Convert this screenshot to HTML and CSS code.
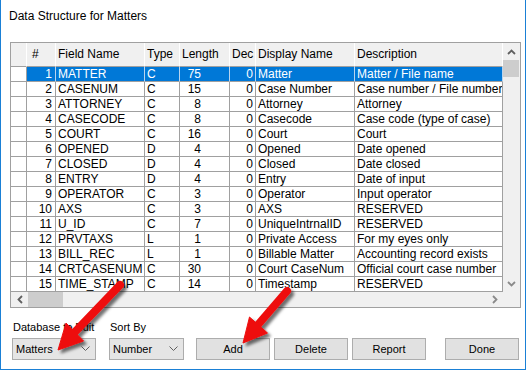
FILE: index.html
```html
<!DOCTYPE html>
<html>
<head>
<meta charset="utf-8">
<link rel="stylesheet" href="styles.css">
</head>
<body>
<div class="window">
  <div class="title">Data Structure for Matters</div>

  <div class="grid">
    <div class="grid-main">
      <div class="table">
        <div class="row head">
          <div class="c sl"></div><div class="c n">#</div><div class="c">Field Name</div><div class="c">Type</div><div class="c">Length</div><div class="c">Dec</div><div class="c">Display Name</div><div class="c">Description</div>
        </div>
        <div class="row sel">
          <div class="c sl"></div><div class="c n">1</div><div class="c">MATTER</div><div class="c">C</div><div class="c len">75</div><div class="c dec">0</div><div class="c">Matter</div><div class="c">Matter / File name</div>
        </div>
        <div class="row">
          <div class="c sl"></div><div class="c n">2</div><div class="c">CASENUM</div><div class="c">C</div><div class="c len">15</div><div class="c dec">0</div><div class="c">Case Number</div><div class="c">Case number / File number</div>
        </div>
        <div class="row">
          <div class="c sl"></div><div class="c n">3</div><div class="c">ATTORNEY</div><div class="c">C</div><div class="c len">8</div><div class="c dec">0</div><div class="c">Attorney</div><div class="c">Attorney</div>
        </div>
        <div class="row">
          <div class="c sl"></div><div class="c n">4</div><div class="c">CASECODE</div><div class="c">C</div><div class="c len">8</div><div class="c dec">0</div><div class="c">Casecode</div><div class="c">Case code (type of case)</div>
        </div>
        <div class="row">
          <div class="c sl"></div><div class="c n">5</div><div class="c">COURT</div><div class="c">C</div><div class="c len">16</div><div class="c dec">0</div><div class="c">Court</div><div class="c">Court</div>
        </div>
        <div class="row">
          <div class="c sl"></div><div class="c n">6</div><div class="c">OPENED</div><div class="c">D</div><div class="c len">4</div><div class="c dec">0</div><div class="c">Opened</div><div class="c">Date opened</div>
        </div>
        <div class="row">
          <div class="c sl"></div><div class="c n">7</div><div class="c">CLOSED</div><div class="c">D</div><div class="c len">4</div><div class="c dec">0</div><div class="c">Closed</div><div class="c">Date closed</div>
        </div>
        <div class="row">
          <div class="c sl"></div><div class="c n">8</div><div class="c">ENTRY</div><div class="c">D</div><div class="c len">4</div><div class="c dec">0</div><div class="c">Entry</div><div class="c">Date of input</div>
        </div>
        <div class="row">
          <div class="c sl"></div><div class="c n">9</div><div class="c">OPERATOR</div><div class="c">C</div><div class="c len">3</div><div class="c dec">0</div><div class="c">Operator</div><div class="c">Input operator</div>
        </div>
        <div class="row">
          <div class="c sl"></div><div class="c n">10</div><div class="c">AXS</div><div class="c">C</div><div class="c len">3</div><div class="c dec">0</div><div class="c">AXS</div><div class="c">RESERVED</div>
        </div>
        <div class="row">
          <div class="c sl"></div><div class="c n">11</div><div class="c">U_ID</div><div class="c">C</div><div class="c len">7</div><div class="c dec">0</div><div class="c">UniqueIntrnalID</div><div class="c">RESERVED</div>
        </div>
        <div class="row">
          <div class="c sl"></div><div class="c n">12</div><div class="c">PRVTAXS</div><div class="c">L</div><div class="c len">1</div><div class="c dec">0</div><div class="c">Private Access</div><div class="c">For my eyes only</div>
        </div>
        <div class="row">
          <div class="c sl"></div><div class="c n">13</div><div class="c">BILL_REC</div><div class="c">L</div><div class="c len">1</div><div class="c dec">0</div><div class="c">Billable Matter</div><div class="c">Accounting record exists</div>
        </div>
        <div class="row">
          <div class="c sl"></div><div class="c n">14</div><div class="c">CRTCASENUM</div><div class="c">C</div><div class="c len">30</div><div class="c dec">0</div><div class="c">Court CaseNum</div><div class="c">Official court case number</div>
        </div>
        <div class="row">
          <div class="c sl"></div><div class="c n">15</div><div class="c">TIME_STAMP</div><div class="c">C</div><div class="c len">14</div><div class="c dec">0</div><div class="c">Timestamp</div><div class="c">RESERVED</div>
        </div>
      </div>
      <div class="vscroll">
        <div class="sbtn"><svg width="9" height="6" viewBox="0 0 9 6"><path d="M1 5 L4.5 1.5 L8 5" class="chev dark"/></svg></div>
        <div class="vthumb"></div>
        <div class="track"></div>
        <div class="sbtn"><svg width="9" height="6" viewBox="0 0 9 6"><path d="M1 1 L4.5 4.5 L8 1" class="chev light"/></svg></div>
      </div>
    </div>
    <div class="grid-foot">
      <div class="hscroll">
        <div class="hbtn"><svg width="6" height="9" viewBox="0 0 6 9"><path d="M5 1 L1.5 4.5 L5 8" class="chev dark"/></svg></div>
        <div class="hthumb"></div>
        <div class="track"></div>
        <div class="hbtn"><svg width="6" height="9" viewBox="0 0 6 9"><path d="M1 1 L4.5 4.5 L1 8" class="chev light"/></svg></div>
      </div>
      <div class="corner"></div>
    </div>
  </div>

  <div class="controls">
    <div class="field f1">
      <div class="label">Database to Edit</div>
      <div class="combo"><span>Matters</span><svg width="9" height="6" viewBox="0 0 9 6"><path d="M0.5 0.5 L4.5 4.5 L8.5 0.5" class="cchev"/></svg></div>
    </div>
    <div class="field f2">
      <div class="label">Sort By</div>
      <div class="combo"><span>Number</span><svg width="9" height="6" viewBox="0 0 9 6"><path d="M0.5 0.5 L4.5 4.5 L8.5 0.5" class="cchev"/></svg></div>
    </div>
    <div class="btn add">Add</div>
    <div class="btn">Delete</div>
    <div class="btn">Report</div>
    <div class="btn done">Done</div>
  </div>

  <svg class="overlay" width="526" height="370" viewBox="0 0 526 370">
    <defs>
      <filter id="sh" x="-30%" y="-30%" width="160%" height="160%">
        <feDropShadow dx="3" dy="3" stdDeviation="1.6" flood-color="#000" flood-opacity="0.55"/>
      </filter>
    </defs>
    <g filter="url(#sh)" fill="#ee1111" stroke="#ee1111">
      <line x1="120" y1="285" x2="72" y2="335" stroke-width="8" stroke-linecap="round"/>
      <polygon points="58,350 83.5,341 66,323" stroke-width="1" stroke-linejoin="round"/>
      <line x1="287" y1="291" x2="256" y2="327" stroke-width="8" stroke-linecap="round"/>
      <polygon points="243,343 267.5,333 249.5,317" stroke-width="1" stroke-linejoin="round"/>
    </g>
  </svg>
</div>
</body>
</html>
```

FILE: styles.css
```css
html, body {
  margin: 0;
  padding: 0;
  background: #ffffff;
}

.window {
  position: relative;
  width: 526px;
  height: 370px;
  box-sizing: border-box;
  border-left: 1px solid #1a80d6;
  border-right: 1px solid #1a80d6;
  border-bottom: 1px solid #1a80d6;
  background: #ffffff;
  font-family: "Liberation Sans", Arial, sans-serif;
  color: #000;
  overflow: hidden;
}

.title {
  padding: 8px 0 0 8px;
  height: 16px;
  line-height: 16px;
  font-size: 12px;
  color: #000;
}

.grid {
  margin: 18px 0 0 9px;
  width: 511px;
  box-sizing: border-box;
  border: 1px solid #a0a0a0;
  background: #f0f0f0;
}

.grid-main {
  display: flex;
}

.table {
  width: 492px;
  font-size: 12px;
}

.row {
  display: grid;
  grid-template-columns: 16px 29px 89px 35px 50px 26px 99px 148px;
  height: 15px;
  background: #ffffff;
}

.c {
  box-sizing: border-box;
  border-right: 1px solid #a0a0a0;
  border-bottom: 1px solid #a0a0a0;
  padding-left: 2px;
  line-height: 14px;
  white-space: nowrap;
  overflow: hidden;
}

.c.n {
  text-align: right;
  padding-left: 0;
  padding-right: 3px;
}

.c.len {
  text-align: right;
  padding-left: 0;
  padding-right: 28px;
}

.c.dec {
  text-align: right;
  padding-left: 0;
  padding-right: 2px;
}

.row.head {
  height: 24px;
  background: #f0f0f0;
}

.row.head .c {
  line-height: 23px;
  border-right-color: #ffffff;
  border-bottom-color: #a0a0a0;
}

.row.head .c.n {
  text-align: left;
  padding-left: 5px;
}

.row.sel .c {
  background: #0078d7;
  color: #ffffff;
  border-right-color: #b9d4ee;
}

.row.sel .c.sl {
  background: #ffffff;
  border-right-color: #a0a0a0;
}

.vscroll {
  width: 17px;
  display: flex;
  flex-direction: column;
  background: #f0f0f0;
}

.sbtn {
  height: 17px;
  display: flex;
  align-items: center;
  justify-content: center;
}

.vthumb {
  height: 17px;
  margin-right: 1px;
  background: #cdcdcd;
}

.track {
  flex: 1;
}

.chev {
  fill: none;
  stroke-width: 1.8;
}

.chev.dark {
  stroke: #606060;
}

.chev.light {
  stroke: #8a8a8a;
}

.grid-foot {
  display: flex;
  height: 15px;
}

.hscroll {
  width: 492px;
  display: flex;
  background: #f0f0f0;
}

.hbtn {
  width: 17px;
  display: flex;
  align-items: center;
  justify-content: center;
}

.hthumb {
  width: 35px;
  background: #cdcdcd;
}

.corner {
  width: 17px;
  background: #f0f0f0;
}

.controls {
  display: flex;
  align-items: flex-end;
  padding-left: 11px;
  margin-top: 12px;
  font-size: 11px;
}

.field {
  display: flex;
  flex-direction: column;
}

.f1 {
  width: 84px;
}

.f2 {
  width: 75px;
  margin-left: 13px;
}

.label {
  line-height: 14px;
  margin-bottom: 4px;
  padding-left: 1px;
  white-space: nowrap;
}

.combo {
  height: 22px;
  box-sizing: border-box;
  border: 1px solid #acacac;
  background: #e5e5e5;
  display: flex;
  align-items: center;
  justify-content: space-between;
  padding: 0 5px 0 3px;
}

.cchev {
  fill: none;
  stroke: #606060;
  stroke-width: 1;
}

.btn {
  width: 74px;
  height: 22px;
  box-sizing: border-box;
  border: 1px solid #adadad;
  background: #e1e1e1;
  display: flex;
  align-items: center;
  justify-content: center;
  margin-left: 4px;
}

.btn.add {
  margin-left: 12px;
}

.btn.done {
  margin-left: 19px;
}

.overlay {
  position: absolute;
  left: -1px;
  top: 0;
  pointer-events: none;
}
```
